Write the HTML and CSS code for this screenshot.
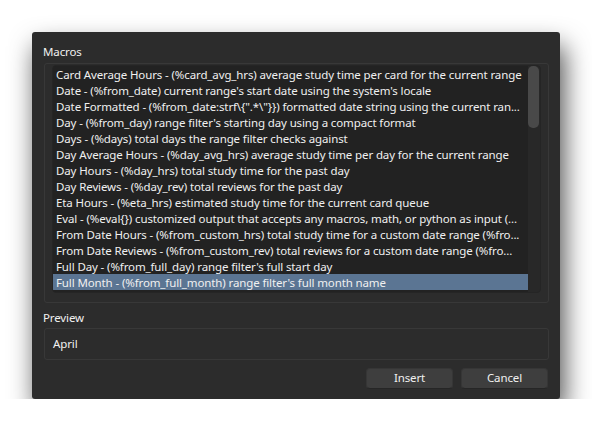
FILE: index.html
```html
<!DOCTYPE html>
<html>
<head>
<meta charset="utf-8">
<link rel="stylesheet" href="styles.css">
</head>
<body>
<div class="dialog">
  <div class="label">Macros</div>
  <div class="frame">
    <div class="list">
      <div class="rows">
        <div class="row">Card Average Hours - (%card_avg_hrs) average study time per card for the current range</div>
        <div class="row">Date - (%from_date) current range's start date using the system's locale</div>
        <div class="row">Date Formatted - (%from_date:strf\{".*\"}}) formatted date string using the current ran...</div>
        <div class="row">Day - (%from_day) range filter's starting day using a compact format</div>
        <div class="row">Days - (%days) total days the range filter checks against</div>
        <div class="row">Day Average Hours - (%day_avg_hrs) average study time per day for the current range</div>
        <div class="row">Day Hours - (%day_hrs) total study time for the past day</div>
        <div class="row">Day Reviews - (%day_rev) total reviews for the past day</div>
        <div class="row">Eta Hours - (%eta_hrs) estimated study time for the current card queue</div>
        <div class="row">Eval - (%eval{}) customized output that accepts any macros, math, or python as input (...</div>
        <div class="row">From Date Hours - (%from_custom_hrs) total study time for a custom date range (%fro...</div>
        <div class="row">From Date Reviews - (%from_custom_rev) total reviews for a custom date range (%fro...</div>
        <div class="row">Full Day - (%from_full_day) range filter's full start day</div>
        <div class="row selected">Full Month - (%from_full_month) range filter's full month name</div>
      </div>
      <div class="scrollbar"><div class="thumb"></div></div>
    </div>
  </div>
  <div class="label preview-label">Preview</div>
  <div class="preview">April</div>
  <div class="buttons">
    <button class="btn">Insert</button>
    <button class="btn">Cancel</button>
  </div>
</div>
</body>
</html>
```
FILE: styles.css
```css
html, body {
  margin: 0;
  padding: 0;
  background: #ffffff;
}
body {
  font-family: "Noto Sans", "Open Sans", sans-serif;
  font-size: 11.5px;
  letter-spacing: -0.12px;
  color: #f0f0f0;
}
.dialog {
  margin: 32px 0 0 32px;
  width: 528px;
  height: 367px;
  box-sizing: border-box;
  background: #2c2c2c;
  border-radius: 3px;
  padding: 12px 11px 0 12px;
  box-shadow: 4px 14px 26px rgba(0, 0, 0, 0.7);
  display: flex;
  flex-direction: column;
}
.label {
  height: 16px;
  line-height: 16px;
  margin-left: -1px;
}
.frame {
  margin-top: 3px;
  height: 240px;
  box-sizing: border-box;
  border: 1px solid #383838;
  border-radius: 3px;
  padding: 1px 7px 0 7px;
}
.list {
  height: 228px;
  box-sizing: border-box;
  border: 1px solid #252525;
  border-radius: 4px;
  background: #282828;
  display: flex;
  overflow: hidden;
}
.rows {
  flex: 1;
  background: #222222;
  overflow: hidden;
}
.row {
  height: 16px;
  line-height: 17px;
  padding-left: 3px;
  white-space: nowrap;
  overflow: hidden;
}
.selected {
  background: #5b7593;
}
.scrollbar {
  width: 12px;
}
.thumb {
  width: 11px;
  height: 62px;
  border-radius: 5px;
  background: #494949;
}
.preview-label {
  margin-top: 7px;
}
.preview {
  margin-top: 2px;
  height: 32px;
  box-sizing: border-box;
  border: 1px solid #383838;
  border-radius: 3px;
  padding-left: 8px;
  line-height: 29px;
}
.buttons {
  margin-top: 8px;
  display: flex;
  justify-content: flex-end;
  gap: 8px;
  padding-right: 1px;
}
.btn {
  width: 87px;
  height: 21px;
  border: 1px solid #363636;
  border-bottom-color: #262626;
  border-radius: 4px;
  background: #3e3e3e;
  color: #f0f0f0;
  font-family: "Noto Sans", "Open Sans", sans-serif;
  font-size: 11.5px;
  letter-spacing: -0.12px;
  padding: 0 0 2px 0;
  line-height: 17px;
}
```
